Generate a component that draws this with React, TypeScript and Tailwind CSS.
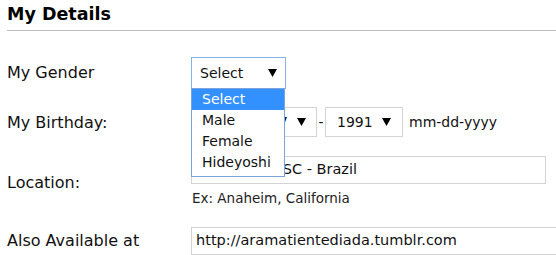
import React from "react";

function Arrow() {
  return (
    <svg width="9" height="8" viewBox="0 0 9 8" className="shrink-0">
      <polygon points="0,0 9,0 4.5,8" fill="#000" />
    </svg>
  );
}

export default function App() {
  return (
    <div className="relative w-[556px] h-[255px] overflow-hidden bg-white text-[#111] font-['DejaVu_Sans',sans-serif]">
      <div className="pl-[7px] pt-[3px]">
        <h2 className="text-[17.5px] font-bold leading-[22px] text-black">My Details</h2>
        <div className="mt-[5px] h-px bg-[#bdbdbd]" />

        {/* Gender */}
        <div className="mt-[26px] flex items-start">
          <div className="w-[184px] shrink-0 mt-[6px] text-[16px] leading-5">My Gender</div>
          <div className="flex items-center justify-between bg-white border border-[#86b2ea] w-[95px] h-[32px] pl-[8px] pr-[8px] text-[14px]">
            <span>Select</span>
            <Arrow />
          </div>
        </div>

        {/* Birthday */}
        <div className="mt-[18px] flex items-start">
          <div className="w-[184px] shrink-0 mt-[6px] text-[16px] leading-5">My Birthday:</div>
          <div className="flex items-center">
            <div className="flex items-center justify-between bg-white border border-[#d4d4d4] w-[60px] h-[30px] pl-[10px] pr-[10px] text-[14px]">
              <span>05</span>
              <Arrow />
            </div>
            <span className="w-[7px] text-center text-[14px]">-</span>
            <div className="flex items-center justify-between bg-white border border-[#d4d4d4] w-[59px] h-[30px] pl-[11px] pr-[10px] text-[14px]">
              <span>27</span>
              <Arrow />
            </div>
            <span className="w-[8px] text-center text-[14px]">-</span>
            <div className="flex items-center justify-between bg-white border border-[#d4d4d4] w-[78px] h-[30px] pl-[11px] pr-[11px] text-[14px]">
              <span>1991</span>
              <Arrow />
            </div>
            <span className="ml-[6px] text-[14px]">mm-dd-yyyy</span>
          </div>
        </div>

        {/* Location */}
        <div className="mt-[19px] flex items-start">
          <div className="w-[184px] shrink-0 mt-[17px] text-[16px] leading-5">Location:</div>
          <div className="flex flex-col">
            <div className="w-[355px] h-[28px] border border-[#d4d4d4] flex items-center pl-[8px] text-[14.5px] whitespace-nowrap overflow-hidden">
              Blumenau, SC - Brazil
            </div>
            <div className="mt-[5px] text-[13.5px] leading-[18px] text-[#222] pl-[1px]">Ex: Anaheim, California</div>
          </div>
        </div>

        {/* Also available */}
        <div className="mt-[20px] flex items-start">
          <div className="w-[184px] shrink-0 mt-[4px] text-[16px] leading-5 whitespace-nowrap">Also Available at</div>
          <div className="w-[420px] h-[28px] shrink-0 border border-[#d4d4d4] flex items-center pl-[4px] text-[14.5px] whitespace-nowrap">
            http://aramatientediada.tumblr.com
          </div>
        </div>
      </div>

      {/* open dropdown list */}
      <div className="absolute left-[191px] top-[88px] w-[94px] border border-[#7aa3e0] bg-white pb-[3px] text-[14px] leading-[21px]">
        <div className="bg-[#3390ff] text-white pl-[10px]">Select</div>
        <div className="pl-[10px]">Male</div>
        <div className="pl-[10px]">Female</div>
        <div className="pl-[10px]">Hideyoshi</div>
      </div>
    </div>
  );
}
